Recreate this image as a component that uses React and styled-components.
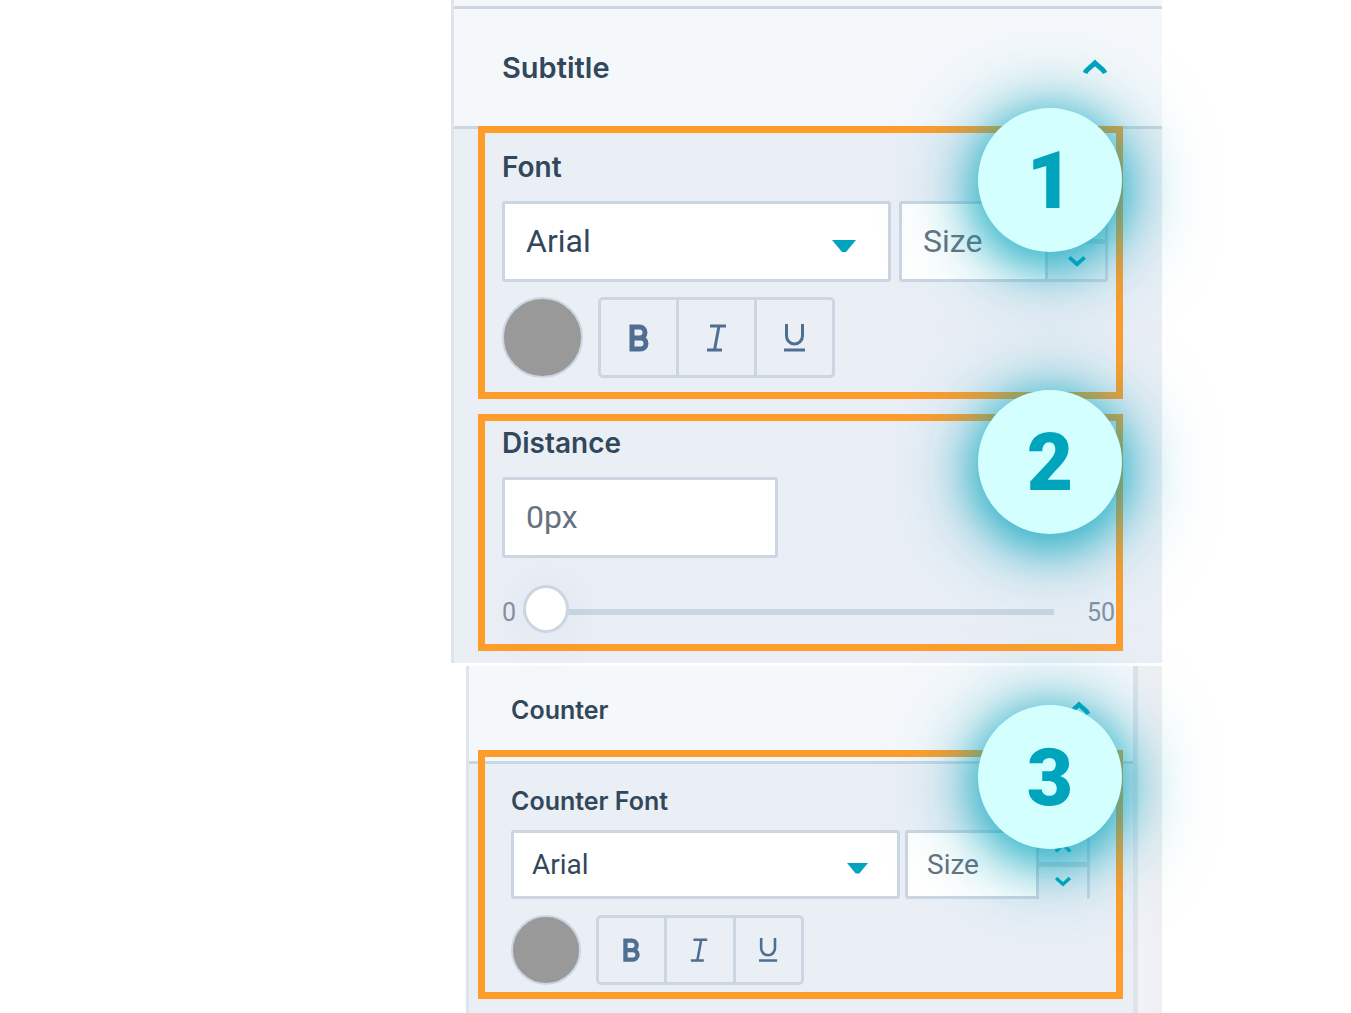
import { useState } from "react";
import styled, { createGlobalStyle } from "styled-components";

const ChevronIcon = ({ width, down }) => (
  <svg width={width} viewBox="0 0 26 16" fill="none" stroke="currentColor">
    <path d={down ? "M3 3l10 9 10-9" : "M3 14c2-4 6-6 10-10 4 4 8 6 10 10"} strokeWidth="5" />
  </svg>
);

const BoldIcon = ({ width }) => (
  <svg width={width} viewBox="0 0 22 28" fill="none" stroke="currentColor">
    <path d="M4 3h7.500a5 5 0 0 1 0 11H4zM4 14h8.500a5.500 5.500 0 0 1 0 11H4z" strokeWidth="5" />
  </svg>
);

const ItalicIcon = ({ width }) => (
  <svg width={width} viewBox="0 0 22 28" fill="none" stroke="currentColor">
    <path d="M4 2h16M1 26h15M13 2L8.500 26" strokeWidth="3" />
  </svg>
);

const UnderlineIcon = ({ width }) => (
  <svg width={width} viewBox="0 0 22 28" fill="none" stroke="currentColor">
    <path d="M2.500 0v12a8 8 0 0 0 16 0V0M0 26h21" strokeWidth="3" />
  </svg>
);

const FontControls = ({ id, label, small }) => {
  const [font, setFont] = useState("Arial");
  const iconWidth = small ? 19 : 22;

  return (
    <>
      <StLabel htmlFor={id} $small={small}>
        {label}
      </StLabel>
      <StFieldRow $small={small}>
        <StSelectBox>
          <StSelect
            id={id}
            $small={small}
            value={font}
            onChange={(e) => setFont(e.target.value)}
          >
            <option>Arial</option>
            <option>Georgia</option>
            <option>Verdana</option>
          </StSelect>
          <StCaret width={small ? 21 : 24} viewBox="0 0 24 12" $small={small}>
            <path d="M0 0h24L14 12h-4z" fill="currentColor" />
          </StCaret>
        </StSelectBox>
        <StSizeBox $small={small}>
          <StSizeInput placeholder="Size" aria-label={`${label} size`} $small={small} />
          <StStepper $small={small}>
            <StStepButton aria-label="Increase size" $small={small}>
              <ChevronIcon width={small ? 18 : 20} />
            </StStepButton>
            <StStepButton aria-label="Decrease size" $small={small}>
              <ChevronIcon width={small ? 18 : 20} down />
            </StStepButton>
          </StStepper>
        </StSizeBox>
      </StFieldRow>
      <StFormatRow $small={small}>
        <StSwatch aria-label="Text color" />
        <StButtonGroup $small={small}>
          <StFormatButton aria-label="Bold">
            <BoldIcon width={iconWidth} />
          </StFormatButton>
          <StFormatButton aria-label="Italic">
            <ItalicIcon width={iconWidth} />
          </StFormatButton>
          <StFormatButton aria-label="Underline">
            <UnderlineIcon width={iconWidth} />
          </StFormatButton>
        </StButtonGroup>
      </StFormatRow>
    </>
  );
};

const App = () => {
  const [distance, setDistance] = useState(0);

  return (
    <StPage>
      <GlobalStyle />
      <StColumn>
        <StPanel>
          <StPanelTop />
          <StHeader>
            <StTitle>Subtitle</StTitle>
            <StToggle aria-label="Collapse Subtitle">
              <ChevronIcon width={26} />
            </StToggle>
          </StHeader>
          <StFrames>
            <StFrame $padding="16px 8px 14px 17px">
              <FontControls id="subtitle-font" label="Font" />
              <StBadge $top={-25}>1</StBadge>
            </StFrame>
            <StFrame $padding="4px 0 8px 17px">
              <StLabel htmlFor="distance">Distance</StLabel>
              <StDistanceInput
                id="distance"
                value={`${distance}px`}
                onChange={(e) => setDistance(parseInt(e.target.value, 10) || 0)}
              />
              <StSliderRow>
                <span>0</span>
                <StRange
                  type="range"
                  min="0"
                  max="50"
                  aria-label="Distance"
                  value={distance}
                  onChange={(e) => setDistance(Number(e.target.value))}
                />
                <StMax>50</StMax>
              </StSliderRow>
              <StBadge $top={-31}>2</StBadge>
            </StFrame>
          </StFrames>
        </StPanel>

        <StCounterRow>
          <StCounterPanel>
            <StHeader $small>
              <StTitle $small>Counter</StTitle>
              <StToggle aria-label="Collapse Counter">
                <ChevronIcon width={24} />
              </StToggle>
            </StHeader>
            <StFrames $small>
              <StFrame $padding="26px 26px 7px 26px">
                <FontControls id="counter-font" label="Counter Font" small />
                <StBadge $top={-52}>3</StBadge>
              </StFrame>
            </StFrames>
          </StCounterPanel>
          <StGutter />
        </StCounterRow>
      </StColumn>
    </StPage>
  );
};

const GlobalStyle = createGlobalStyle`
  * {
    box-sizing: border-box;
  }

  body {
    margin: 0;
    background-color: #ffffff;
    color: #33475b;
    font-family: Inter, "Open Sans", sans-serif;
  }

  button,
  input,
  select {
    margin: 0;
    padding: 0;
    border: 0;
    border-radius: 0;
    background: none;
    color: inherit;
    font-family: Roboto, "Liberation Sans", sans-serif;
  }

  svg {
    display: block;
  }
`;

const StPage = styled.main`
  display: grid;
  grid-template-columns: 451fr 711fr 189fr;
  overflow: hidden;
`;

const StColumn = styled.div`
  grid-column: 2 / 3;
  display: flex;
  flex-direction: column;
  gap: 3px;
`;

const StPanel = styled.section`
  border-left: 3px solid #dfe3eb;
  background-color: #eaeff6;
`;

const StPanelTop = styled.div`
  height: 9px;
  border-bottom: 3px solid #cbd6e2;
  background-color: #f5f8fb;
`;

const StHeader = styled.header`
  display: flex;
  align-items: center;
  justify-content: space-between;

  padding: ${({ $small }) => ($small ? "26px 42px 33px 42px" : "41px 54px 40px 48px")};

  border-bottom: 3px solid #cbd6e2;
  background-color: #f5f8fb;
`;

const StTitle = styled.h2`
  margin: 0;

  font-size: ${({ $small }) => ($small ? "25px" : "29px")};
  font-weight: 600;
  line-height: 36px;
`;

const StToggle = styled.button`
  padding-bottom: 3px;

  color: #00a4bd;
`;

const StFrames = styled.div`
  display: flex;
  flex-direction: column;
  gap: 15px;

  margin-top: ${({ $small }) => ($small ? "-14px" : "-3px")};
  padding: ${({ $small }) => ($small ? "0 10px 14px 9px" : "0 39px 12px 24px")};
`;

const StFrame = styled.div`
  position: relative;
  padding: ${({ $padding }) => $padding};
  border: 7px solid #ff9d2b;
`;

const StBadge = styled.span`
  position: absolute;
  top: ${({ $top }) => $top}px;
  right: -6px;
  z-index: 1;

  display: flex;
  align-items: center;
  justify-content: center;
  width: 144px;
  height: 144px;
  padding-top: 2px;

  border-radius: 50%;
  background-color: #d3ffff;
  box-shadow:
    0 9px 40px 5px rgba(0, 164, 189, 0.65),
    0 9px 80px 12px rgba(0, 164, 189, 0.5);

  color: #00a4bd;
  font-family: Roboto, sans-serif;
  font-size: 80px;
  font-weight: 900;
  line-height: 80px;
`;

const StLabel = styled.label`
  display: block;
  margin-bottom: ${({ $small }) => ($small ? "11px" : "16px")};

  font-size: ${({ $small }) => ($small ? "25px" : "28px")};
  font-weight: 600;
  line-height: 36px;
`;

const StFieldRow = styled.div`
  display: flex;
  gap: ${({ $small }) => ($small ? "5px" : "8px")};
  height: ${({ $small }) => ($small ? "69px" : "81px")};
`;

const StSelectBox = styled.div`
  display: grid;
  flex: 1;
  align-items: center;
`;

const StSelect = styled.select`
  grid-area: 1 / 1;
  width: 100%;
  height: 100%;
  padding-left: ${({ $small }) => ($small ? "18px" : "21px")};
  padding-bottom: ${({ $small }) => ($small ? "0" : "2px")};

  appearance: none;
  border: 3px solid #cbd6e2;
  border-radius: 3px;
  background-color: #ffffff;

  font-size: ${({ $small }) => ($small ? "28px" : "32px")};
`;

const StCaret = styled.svg`
  grid-area: 1 / 1;
  justify-self: end;
  margin-top: 8px;
  margin-right: ${({ $small }) => ($small ? "32px" : "35px")};

  color: #00a4bd;
  pointer-events: none;
`;

const StSizeBox = styled.div`
  display: flex;
  width: ${({ $small }) => ($small ? "185px" : "209px")};

  border: 3px solid #cbd6e2;
  border-radius: 3px;
  background-color: #ffffff;
`;

const StSizeInput = styled.input`
  flex: 1;
  min-width: 0;
  padding-left: ${({ $small }) => ($small ? "19px" : "21px")};
  padding-bottom: ${({ $small }) => ($small ? "0" : "2px")};

  font-size: ${({ $small }) => ($small ? "28px" : "32px")};

  &::placeholder {
    color: #66727f;
    opacity: 1;
  }
`;

/* the small stepper hangs over the bottom border of its box */
const StStepper = styled.div`
  display: flex;
  flex-direction: column;
  width: ${({ $small }) => ($small ? "51px" : "60px")};
  margin-bottom: ${({ $small }) => ($small ? "-3px" : "0")};
  padding-bottom: ${({ $small }) => ($small ? "3px" : "0")};

  border-left: 3px solid #cbd6e2;
  background-color: #eaeff6;
`;

const StStepButton = styled.button`
  display: flex;
  flex: 1;
  align-items: center;
  justify-content: center;

  color: #00a4bd;

  & + & {
    border-top: ${({ $small }) => ($small ? "5px" : "3px")} solid #cbd6e2;
  }
`;

const StFormatRow = styled.div`
  display: flex;
  gap: 15px;
  height: ${({ $small }) => ($small ? "70px" : "81px")};
  margin-top: ${({ $small }) => ($small ? "16px" : "15px")};
`;

const StSwatch = styled.button`
  height: 100%;
  aspect-ratio: 1;

  border: 2px solid #cbd6e2;
  border-radius: 50%;
  background-color: #999999;
`;

const StButtonGroup = styled.div`
  display: flex;
  width: ${({ $small }) => ($small ? "208px" : "237px")};

  border: 3px solid #cbd6e2;
  border-radius: 5px;
`;

const StFormatButton = styled.button`
  display: flex;
  flex: 1;
  align-items: center;
  justify-content: center;

  color: #506e91;

  & + & {
    border-left: 3px solid #cbd6e2;
  }
`;

const StDistanceInput = styled.input`
  display: block;
  width: 276px;
  height: 81px;
  padding-left: 21px;
  padding-bottom: 2px;

  border: 3px solid #cbd6e2;
  border-radius: 3px;
  background-color: #ffffff;

  color: #66727f;
  font-size: 32px;
`;

const StSliderRow = styled.div`
  display: grid;
  grid-template-columns: 21px 1fr 62px;
  align-items: center;
  height: 48px;
  margin-top: 30px;

  color: #8292a6;
  font-family: Roboto, sans-serif;
  font-size: 25px;
`;

const StMax = styled.span`
  padding-right: 1px;
  text-align: right;
`;

const StRange = styled.input`
  width: 100%;
  height: 48px;
  appearance: none;

  &::-webkit-slider-runnable-track {
    height: 6px;
    background-color: #cbd6e2;
  }

  &::-webkit-slider-thumb {
    width: 46px;
    height: 48px;
    margin-top: -24px;

    appearance: none;
    border: 3px solid #cbd6e2;
    border-radius: 50%;
    background-color: #ffffff;
    box-shadow: 0 3px 54px rgba(45, 62, 80, 0.08);
  }
`;

const StCounterRow = styled.div`
  display: flex;
  margin-left: 15px;
`;

const StCounterPanel = styled.section`
  flex: 1;

  border-left: 3px solid #dfe3eb;
  background-color: #eaeff6;
`;

const StGutter = styled.div`
  width: 29px;

  border-left: 5px solid #dfe3eb;
  background: linear-gradient(to right, #f0f3f7, #efeff2);
`;

export default App;
